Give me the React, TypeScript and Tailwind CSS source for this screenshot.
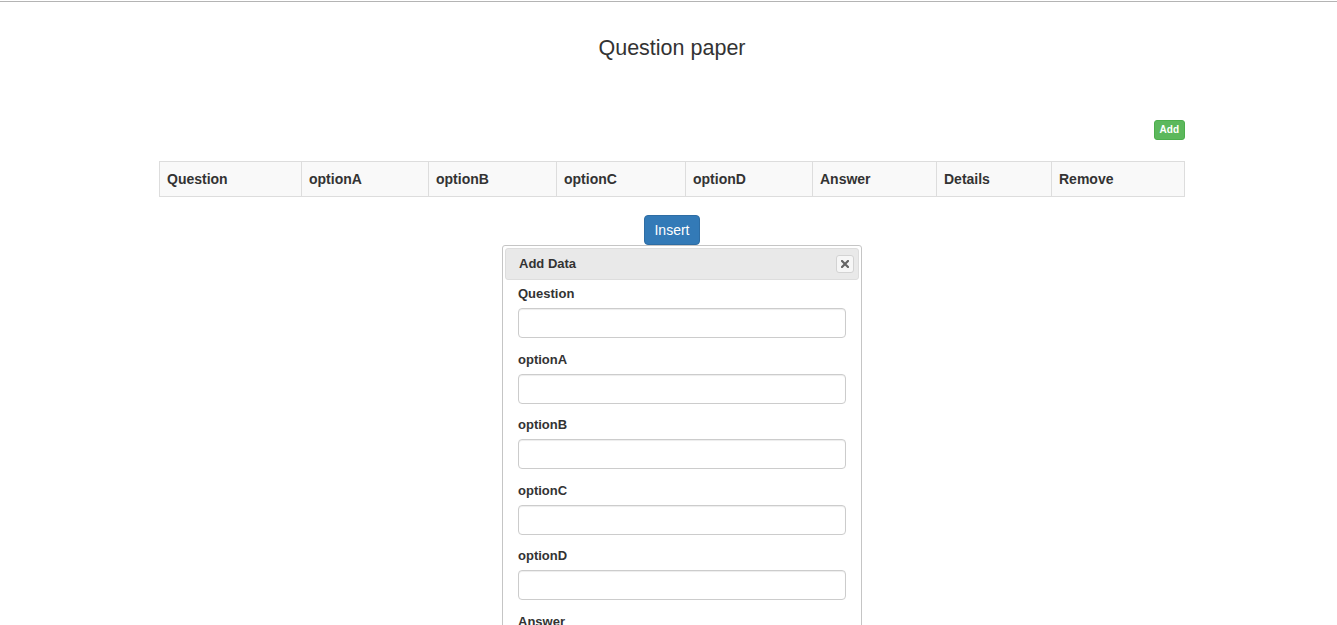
import React from 'react';

const columns = ['Question', 'optionA', 'optionB', 'optionC', 'optionD', 'Answer', 'Details', 'Remove'];
const fields = ['Question', 'optionA', 'optionB', 'optionC', 'optionD', 'Answer', 'Details'];

export default function App() {
  return (
    <div
      className="h-[625px] overflow-hidden bg-white text-[#333]"
      style={{ fontFamily: '"Liberation Sans", Arial, Helvetica, sans-serif' }}
    >
      <div className="mt-px h-px bg-[#b4b4b4]" />

      <div className="ml-[159px] w-[1026px]">
        <h3 className="mt-[34px] text-center text-[21.5px] leading-[24px] font-normal">Question paper</h3>

        <div className="mt-[60px] flex justify-end">
          <button
            type="button"
            className="h-[20px] rounded-[3px] border border-[#4cae4c] bg-[#5cb85c] px-[5px] text-[10px] leading-[18px] font-bold text-white"
          >
            Add
          </button>
        </div>

        {/* question table header */}
        <div className="mt-[21px] grid grid-cols-[141px_127px_128px_129px_127px_124px_115px_133px] border border-[#ddd] bg-[#f9f9f9]">
          {columns.map((c, i) => (
            <div
              key={c}
              className={`py-[7px] pl-[7px] text-[14px] leading-[20px] font-bold ${i > 0 ? 'border-l border-[#ddd]' : ''}`}
            >
              {c}
            </div>
          ))}
        </div>

        <div className="mt-[18px] flex justify-center">
          <button
            type="button"
            className="h-[30px] rounded-[4px] border border-[#2e6da4] bg-[#337ab7] px-[9px] text-[14px] leading-[20px] text-white"
          >
            Insert
          </button>
        </div>

        {/* add data dialog */}
        <div className="ml-[343px] w-[360px] rounded-[3px] border border-[#c5c5c5] bg-white p-[2px]">
          <div className="flex h-[32px] items-center justify-between rounded-[3px] border border-[#ddd] bg-[#e9e9e9] pl-[13px] pr-[4px]">
            <span className="text-[13px] font-bold">Add Data</span>
            <button
              type="button"
              className="flex h-[18px] w-[18px] items-center justify-center rounded-[3px] border border-[#d3d3d3] bg-[#f6f6f6]"
            >
              <svg width="8" height="8" viewBox="0 0 8 8">
                <path d="M1 1L7 7M7 1L1 7" stroke="#666" strokeWidth="2.2" strokeLinecap="square" />
              </svg>
            </button>
          </div>
          <div className="px-[13px] pt-[4px]">
            {fields.map((f) => (
              <div key={f} className="mb-[11.5px]">
                <label className="mb-[5px] block text-[13px] leading-[19px] font-bold">{f}</label>
                <input
                  type="text"
                  className="block h-[30px] w-[328px] rounded-[4px] border border-[#ccc] bg-white px-3 shadow-[inset_0_1px_1px_rgba(0,0,0,0.075)] outline-none"
                />
              </div>
            ))}
          </div>
        </div>
      </div>
    </div>
  );
}
